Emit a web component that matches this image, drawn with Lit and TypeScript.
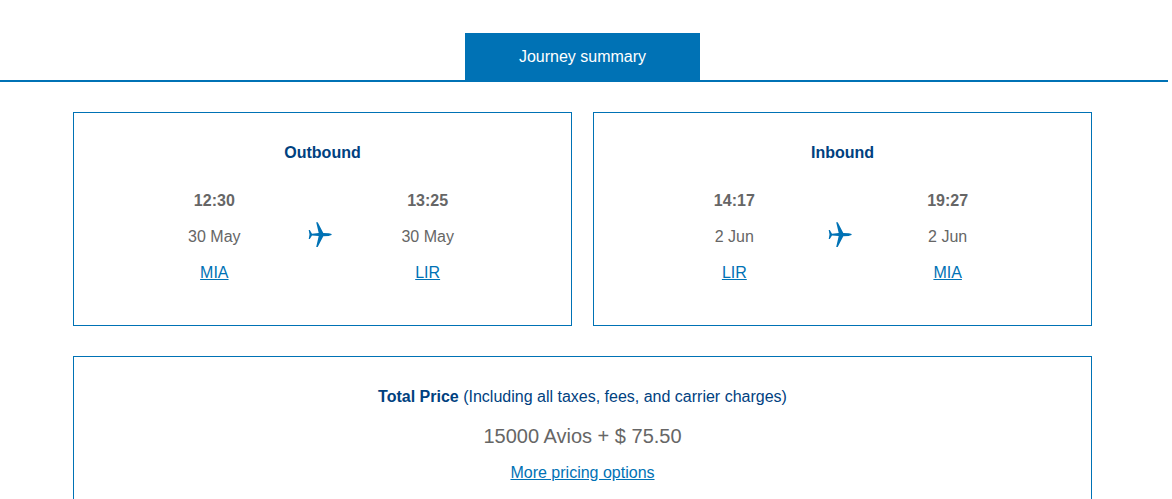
import { LitElement, html, css } from "lit";
import { customElement, property } from "lit/decorators.js";

interface Stop {
  time: string;
  date: string;
  airport: string;
}

@customElement("flight-card")
class FlightCard extends LitElement {
  @property() heading = "";
  @property({ attribute: false }) from!: Stop;
  @property({ attribute: false }) to!: Stop;

  static styles = css`
    :host {
      display: block;
      box-sizing: border-box;
      border: 1px solid #0072b5;
      padding: 28px 0 34px;
      text-align: center;
    }
    .heading {
      margin: 0 0 18px;
      font-size: 16px;
      line-height: 24px;
      color: #00417f;
    }
    .route {
      display: grid;
      grid-template-columns: repeat(3, 1fr);
      align-items: center;
      padding: 0 90px 0 87px;
    }
    .stop {
      display: flex;
      flex-direction: column;
      align-items: center;
      line-height: 36px;
    }
    .time {
      font-weight: bold;
    }
    .plane {
      display: block;
      margin: 0 auto;
      overflow: visible;
    }
    a {
      color: #0072b5;
    }
  `;

  private stop(s: Stop) {
    return html`<div class="stop">
      <time class="time">${s.time}</time>
      <span>${s.date}</span>
      <a href="#${s.airport}">${s.airport}</a>
    </div>`;
  }

  render() {
    return html`
      <h2 class="heading">${this.heading}</h2>
      <div class="route">
        ${this.stop(this.from)}
        <svg class="plane" width="24" height="28" viewBox="0.7 1 24 28" aria-hidden="true">
          <path
            fill="#0072b5"
            d="M7.900.3H9.400L15 10.900 20.500 11.300C22 11.500 23.400 12 23.400 12.600S22 13.700 20.500 13.900L15 14.300 9.400 24.900H7.900L10.400 14.100 3.700 13.500 1.500 17.100H.4L1.200 12.600.4 8.100H1.500L3.700 11.700 10.400 11.100z"
          />
        </svg>
        ${this.stop(this.to)}
      </div>
    `;
  }
}

@customElement("app-root")
class AppRoot extends LitElement {
  static styles = css`
    :host {
      display: block;
      background: #fff;
      color: #666;
      font-family: "Liberation Sans", Arial, sans-serif;
      font-size: 16px;
    }
    .page {
      margin-right: 4px;
    }
    .tabs,
    .content {
      padding-left: 73px;
      padding-right: 76px;
    }
    .tabs {
      display: flex;
      justify-content: center;
      padding-top: 33px;
      border-bottom: 2px solid #0072b5;
    }
    .tab {
      width: 235px;
      border: 0;
      padding: 12px 0 11px;
      background: #0072b5;
      color: #fff;
      font: inherit;
      line-height: 24px;
    }
    .content {
      display: grid;
      gap: 30px;
      padding-top: 30px;
    }
    .flights {
      display: grid;
      grid-template-columns: 1fr 1fr;
      gap: 21px;
    }
    .price {
      border: 1px solid #0072b5;
      padding: 28px 0 34px;
      text-align: center;
    }
    .title {
      margin: 0 0 8px;
      font-size: 16px;
      font-weight: normal;
      line-height: 24px;
      color: #00417f;
    }
    .amount {
      margin: 0;
      font-size: 20px;
      line-height: 38px;
    }
    .more {
      margin: 0;
      line-height: 36px;
    }
    a {
      color: #0072b5;
    }
  `;

  render() {
    return html`
      <div class="page">
        <header class="tabs"><button class="tab" type="button">Journey summary</button></header>
        <main class="content">
          <div class="flights">
            <flight-card
              heading="Outbound"
              .from=${{ time: "12:30", date: "30 May", airport: "MIA" }}
              .to=${{ time: "13:25", date: "30 May", airport: "LIR" }}
            ></flight-card>
            <flight-card
              heading="Inbound"
              .from=${{ time: "14:17", date: "2 Jun", airport: "LIR" }}
              .to=${{ time: "19:27", date: "2 Jun", airport: "MIA" }}
            ></flight-card>
          </div>
          <section class="price">
            <h2 class="title"><strong>Total Price</strong> (Including all taxes, fees, and carrier charges)</h2>
            <p class="amount">15000 Avios + $ 75.50</p>
            <p class="more"><a href="#pricing">More pricing options</a></p>
          </section>
        </main>
      </div>
    `;
  }
}
